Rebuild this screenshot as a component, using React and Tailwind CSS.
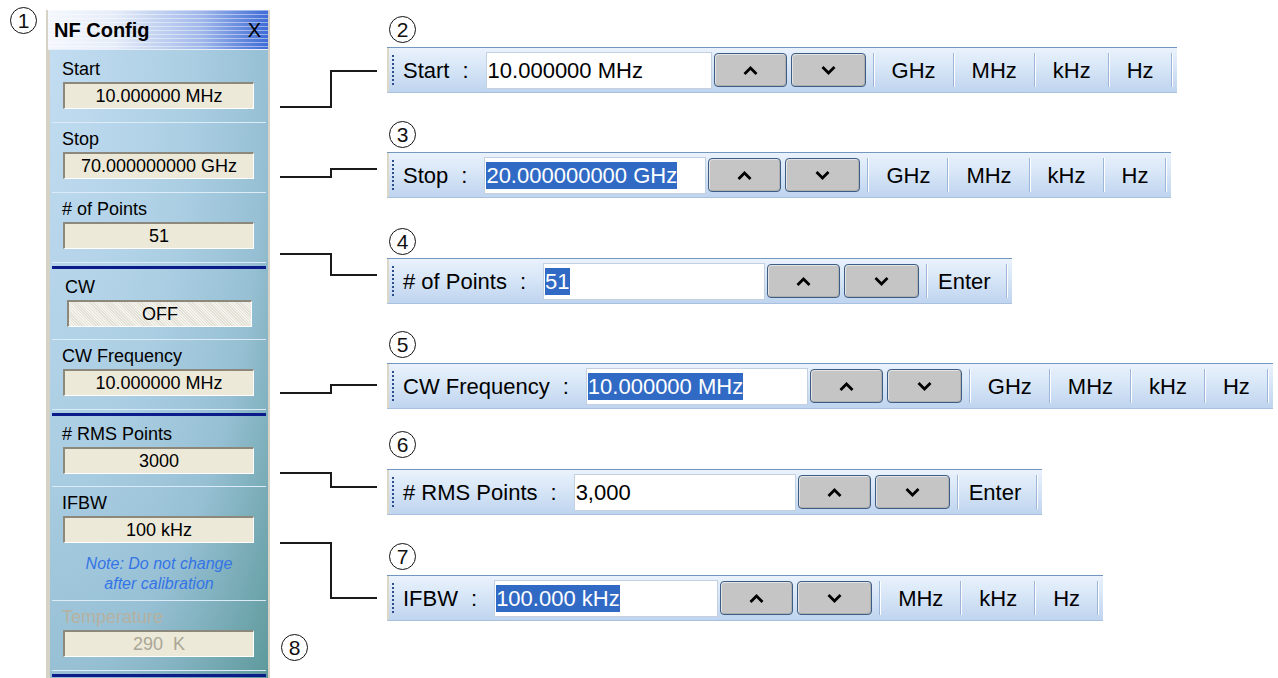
const Num = ({ n }) => (
  <div className="flex h-[27px] w-[27px] items-center justify-center rounded-full border-[1.5px] border-[#111] text-[21px] leading-none text-[#111]">
    {n}
  </div>
);

const Chevron = ({ up }) => (
  <svg width="15" height="9" viewBox="0 0 15 9">
    <path d={up ? 'M1.5 8 L7.5 2 L13.5 8' : 'M1.5 1 L7.5 7 L13.5 1'} fill="none" stroke="#000" strokeWidth="2.8" />
  </svg>
);

const Sep = () => (
  <div className="flex h-[34px]">
    <div className="w-px bg-[#9db5d6]" />
    <div className="w-px bg-white" />
  </div>
);

const Toolbar = ({ label, value, selected, units, enter, inputW }) => (
  <div className="flex h-[45px] w-fit items-center border-t border-[#7397c0] bg-[linear-gradient(180deg,#eaf2fc_0%,#d7e6f7_45%,#bfd4ef_100%)] pr-[4px] shadow-[0_1px_0_#a9c0de] text-[22px] text-black">
    <div className="h-full w-[2px] bg-[#ddd7c6]" />
    <div className="ml-[3px] h-[30px] border-l-2 border-dotted border-[#2d4c8c]" />
    <span className="ml-[9px]">{label}</span>
    <span className="ml-[13px]">:</span>
    <div className={`ml-[17px] flex h-[37px] ${inputW} items-center border border-[#c3d0e0] bg-white pl-[1px]`}>
      <span className={selected ? 'bg-[#316ac5] leading-[27px] text-white' : 'leading-[27px]'}>{value}</span>
    </div>
    <button className="ml-[2px] flex h-[34px] w-[73px] items-center justify-center rounded-[4px] border border-[#3d5d85] bg-[#c5c5c5] shadow-[inset_1px_1px_0_#e4e4e4,inset_-1px_-1px_0_#b0b0b0]">
      <Chevron up />
    </button>
    <button className="ml-[4px] flex h-[34px] w-[75px] items-center justify-center rounded-[4px] border border-[#3d5d85] bg-[#c5c5c5] shadow-[inset_1px_1px_0_#e4e4e4,inset_-1px_-1px_0_#b0b0b0]">
      <Chevron />
    </button>
    <div className="ml-[7px]">
      <Sep />
    </div>
    {enter ? (
      <>
        <span className="pl-[10px] pr-[15px]">Enter</span>
        <Sep />
      </>
    ) : (
      units.map((u) => (
        <div key={u} className="flex items-center">
          <span className="px-[17px]">{u}</span>
          <Sep />
        </div>
      ))
    )}
  </div>
);

const Field = ({ label, value, pt, pb, dim, cw, children }) => (
  <div className={`flex flex-col ${pt} ${pb}`}>
    <div className={`h-[20px] leading-[20px] ${cw ? 'pl-[15px]' : 'pl-[12px]'} ${dim ? 'text-[#b6b1a1]' : 'text-black'}`}>{label}</div>
    <div
      className={`mt-[3px] flex h-[27px] items-center justify-center whitespace-pre border-t-2 border-l-2 border-b border-r border-t-[#8c897c] border-l-[#8c897c] border-b-white border-r-white ${
        cw
          ? 'ml-[17px] mr-[16px] bg-[repeating-linear-gradient(45deg,#f4f3ed_0px,#f4f3ed_1px,#e3e1d6_1px,#e3e1d6_2px)]'
          : 'ml-[13px] mr-[14px] bg-[#ece9d8]'
      } ${dim ? 'text-[#aaa696]' : 'text-black'}`}
    >
      {value}
    </div>
    {children}
  </div>
);

const Line = () => <div className="mx-[2px] h-px bg-[#dcebf8]" />;
const Navy = () => (
  <>
    <div className="h-[3px]" />
    <div className="mx-[2px] h-[3px] bg-[#0b1c8a]" />
  </>
);

const Panel = () => (
  <div className="mt-[10px] flex h-[668px] w-[224px] flex-col bg-[#d6d2c6] px-[2px] text-[18px]">
    <div className="flex h-[40px] items-center justify-between border-b border-[#e8eefa] bg-[repeating-linear-gradient(180deg,rgba(255,255,255,0.45)_0px,rgba(255,255,255,0.45)_1px,rgba(255,255,255,0)_1px,rgba(255,255,255,0)_4px),linear-gradient(90deg,#f4f7fd_0%,#e6edf9_30%,#9fb7ea_70%,#3e6bd6_100%)] pl-[6px] pr-[7px] text-[20px] font-bold text-black">
      <span>NF Config</span>
      <span className="font-normal">X</span>
    </div>
    <div className="ml-[2px] flex flex-1 flex-col bg-[radial-gradient(ellipse_at_0%_0%,#c3ddf2_0%,#abcee3_45%,#97c0d4_70%,#5d999b_100%)]">
      <Field label="Start" value="10.000000 MHz" pt="pt-[9px]" pb="pb-[13px]" />
      <Line />
      <Field label="Stop" value="70.000000000 GHz" pt="pt-[6px]" pb="pb-[13px]" />
      <Line />
      <Field label="# of Points" value="51" pt="pt-[6px]" pb="pb-[13px]" />
      <Line />
      <Navy />
      <Field label="CW" value="OFF" pt="pt-[8px]" pb="pb-[12px]" cw />
      <Line />
      <Field label="CW Frequency" value="10.000000 MHz" pt="pt-[6px]" pb="pb-[13px]" />
      <Line />
      <Navy />
      <Field label="# RMS Points" value="3000" pt="pt-[8px]" pb="pb-[12px]" />
      <Line />
      <Field label="IFBW" value="100 kHz" pt="pt-[6px]" pb="pb-[6px]">
        <div className="mt-[11px] text-center text-[16px] italic leading-[20px] text-[#3474e6]">
          Note: Do not change
          <br />
          after calibration
        </div>
      </Field>
      <Line />
      <Field label="Temperature" value="290  K" pt="pt-[6px]" pb="pb-[13px]" dim />
      <Line />
      <Navy />
    </div>
  </div>
);

export default function App() {
  return (
    <div className="relative h-[678px] w-[1278px] overflow-hidden bg-white font-['Liberation_Sans',Arial,sans-serif]">
      <div className="flex">
        <div className="w-[46px] pl-[10px] pt-[7px]">
          <Num n="1" />
        </div>
        <Panel />
        <div className="w-[117px] pl-[11px] pt-[634px]">
          <Num n="8" />
        </div>
        <div className="flex flex-col">
          <div className="ml-[2px] mt-[16px]"><Num n="2" /></div>
          <div className="mt-[4px]">
            <Toolbar label="Start" value="10.000000 MHz" units={['GHz', 'MHz', 'kHz', 'Hz']} inputW="w-[226px]" />
          </div>
          <div className="ml-[2px] mt-[29px]"><Num n="3" /></div>
          <div className="mt-[4px]">
            <Toolbar label="Stop" value="20.000000000 GHz" selected units={['GHz', 'MHz', 'kHz', 'Hz']} inputW="w-[222px]" />
          </div>
          <div className="ml-[2px] mt-[31px]"><Num n="4" /></div>
          <div className="mt-[3px]">
            <Toolbar label="# of Points" value="51" selected enter inputW="w-[222px]" />
          </div>
          <div className="ml-[2px] mt-[28px]"><Num n="5" /></div>
          <div className="mt-[5px]">
            <Toolbar label="CW Frequency" value="10.000000 MHz" selected units={['GHz', 'MHz', 'kHz', 'Hz']} inputW="w-[222px]" />
          </div>
          <div className="ml-[2px] mt-[23px]"><Num n="6" /></div>
          <div className="mt-[11px]">
            <Toolbar label="# RMS Points" value="3,000" enter inputW="w-[222px]" />
          </div>
          <div className="ml-[2px] mt-[29px]"><Num n="7" /></div>
          <div className="mt-[5px]">
            <Toolbar label="IFBW" value="100.000 kHz" selected units={['MHz', 'kHz', 'Hz']} inputW="w-[224px]" />
          </div>
        </div>
      </div>
      <svg className="pointer-events-none absolute left-0 top-0" width="1278" height="678" viewBox="0 0 1278 678">
        <g fill="none" stroke="#1a1a1a" strokeWidth="2">
          <path d="M280 107 H331 V71 H377" />
          <path d="M280 177 H331 V169 H377" />
          <path d="M280 254 H331 V275 H377" />
          <path d="M280 393 H331 V385 H377" />
          <path d="M280 473 H331 V487 H377" />
          <path d="M280 543 H331 V598 H377" />
        </g>
      </svg>
    </div>
  );
}
